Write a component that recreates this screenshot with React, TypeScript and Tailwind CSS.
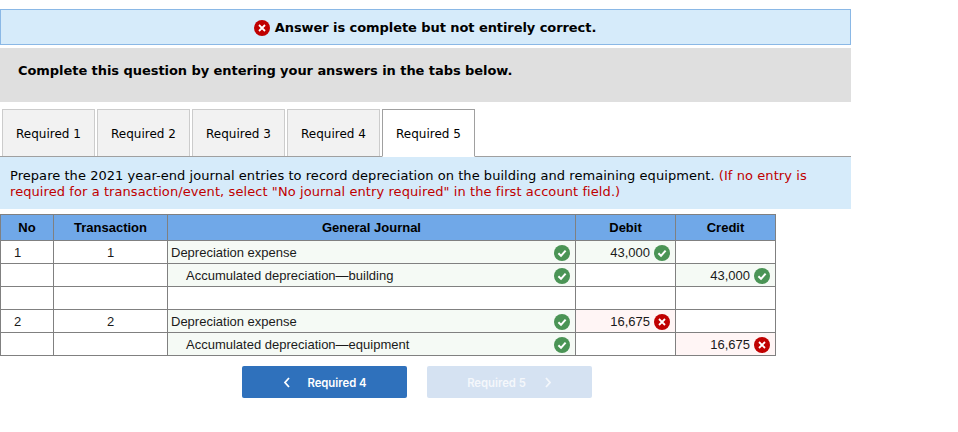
const verdana = { fontFamily: '"DejaVu Sans", sans-serif' };

function Check() {
  return (
    <svg width="16" height="16" viewBox="0 0 16 16" className="shrink-0">
      <circle cx="8" cy="8" r="8" fill="#4a9455" />
      <path d="M4.4 8.3 L7 10.8 L11.6 5.6" fill="none" stroke="#fff" strokeWidth="2" />
    </svg>
  );
}

function Cross({ size = 16 }: { size?: number }) {
  return (
    <svg width={size} height={size} viewBox="0 0 16 16" className="shrink-0">
      <circle cx="8" cy="8" r="8" fill="#c00000" />
      <path d="M5 5 L11 11 M11 5 L5 11" fill="none" stroke="#fff" strokeWidth="1.8" />
    </svg>
  );
}

type Row = {
  no: string;
  tx: string;
  acct: string;
  indent?: boolean;
  debit?: string;
  debitOk?: boolean;
  credit?: string;
  creditOk?: boolean;
};

const rows: Row[] = [
  { no: "1", tx: "1", acct: "Depreciation expense", debit: "43,000", debitOk: true },
  { no: "", tx: "", acct: "Accumulated depreciation—building", indent: true, credit: "43,000", creditOk: true },
  { no: "", tx: "", acct: "" },
  { no: "2", tx: "2", acct: "Depreciation expense", debit: "16,675", debitOk: false },
  { no: "", tx: "", acct: "Accumulated depreciation—equipment", indent: true, credit: "16,675", creditOk: false },
];

function Amount({ value, ok }: { value?: string; ok?: boolean }) {
  const bg = !value ? "" : ok ? "bg-[#f5faf5]" : "bg-[#fff5f5]";
  return (
    <td className={`border border-[#808080] p-0 pr-[5px] pt-[1px] text-right ${bg}`}>
      {value && (
        <div className="flex items-center justify-end gap-[4px]">
          <span>{value}</span>
          {ok ? <Check /> : <Cross />}
        </div>
      )}
    </td>
  );
}

const tabs = ["Required 1", "Required 2", "Required 3", "Required 4", "Required 5"];

export default function App() {
  return (
    <div className="w-[958px] h-[432px] bg-white pt-[9px] overflow-hidden text-black" style={verdana}>
      <div className="w-[851px]">
        <div className="h-[36px] border border-[#8ab8e6] bg-[#d6ebfa] flex items-center justify-center gap-[5px] pr-[1px] pt-[1px] text-[13px] font-bold tracking-[-0.07px]">
          <Cross />
          <span>Answer is complete but not entirely correct.</span>
        </div>
        <div className="mt-[3px] h-[54px] bg-[#dfdfdf] pl-[18px] pt-[14px] text-[13px] font-bold leading-[18px] tracking-[-0.06px]">
          Complete this question by entering your answers in the tabs below.
        </div>
        <div className="mt-[7px] h-[48px] flex gap-[2px] pl-[2px] border-b border-[#a0a0a0]">
          {tabs.map((t, i) => (
            <div
              key={t}
              className={`w-[93px] flex items-center justify-center text-[12px] border pt-[1px] ${
                i === 4
                  ? "h-[48px] bg-white border-[#a0a0a0] border-b-white"
                  : "h-[47px] bg-[#f2f2f2] border-[#cccccc] border-b-0"
              }`}
            >
              {t}
            </div>
          ))}
        </div>
        <div className="h-[52px] bg-[#d6ebfa] pl-[10px] pr-[20px] pt-[11px] text-[13px] leading-[16px] tracking-[0.05px]">
          Prepare the 2021 year-end journal entries to record depreciation on the building and remaining equipment.{" "}
          <span className="text-[#c00000] tracking-[0.08px]">
            (If no entry is required for a transaction/event, select "No journal entry required" in the first account field.)
          </span>
        </div>
      </div>

      <table
        className="mt-[5px] w-[776px] table-fixed border-collapse text-[13px] text-[#1a1a1a]"
        style={{ fontFamily: '"Liberation Sans", Arial, sans-serif' }}
      >
        <colgroup>
          <col className="w-[53px]" />
          <col className="w-[114px]" />
          <col className="w-[408px]" />
          <col className="w-[100px]" />
          <col className="w-[100px]" />
        </colgroup>
        <thead>
          <tr className="h-[26px] bg-[#70a8e8] text-black">
            {["No", "Transaction", "General Journal", "Debit", "Credit"].map((h) => (
              <th key={h} className="border border-[#808080] p-0 font-bold text-center">
                {h}
              </th>
            ))}
          </tr>
        </thead>
        <tbody>
          {rows.map((r, i) => (
            <tr key={i} className="h-[23px]">
              <td className="border border-[#808080] p-0 pl-[13px] pt-[1px] text-left">{r.no}</td>
              <td className="border border-[#808080] p-0 pt-[1px] text-center">{r.tx}</td>
              <td className={`border border-[#808080] p-0 pr-[5px] pt-[1px] ${r.acct ? "bg-[#f5faf5]" : ""}`}>
                {r.acct && (
                  <div className="flex items-center justify-between">
                    <span className={r.indent ? "pl-[18px]" : "pl-[3px]"}>{r.acct}</span>
                    <Check />
                  </div>
                )}
              </td>
              <Amount value={r.debit} ok={r.debitOk} />
              <Amount value={r.credit} ok={r.creditOk} />
            </tr>
          ))}
        </tbody>
      </table>

      <div className="mt-[10px] flex gap-[20px] pl-[242px]" style={{ fontFamily: "Inter, sans-serif" }}>
        <div className="w-[165px] h-[32px] rounded-[2px] bg-[#2f71bc] flex items-center justify-center gap-[16px] pl-[1px] text-white text-[11.3px] font-semibold">
          <svg width="8" height="11" viewBox="0 0 8 11">
            <path d="M6 1 L2 5.5 L6 10" fill="none" stroke="#fff" strokeWidth="1.8" />
          </svg>
          <span className="pt-[2px]">Required 4</span>
        </div>
        <div className="w-[165px] h-[32px] rounded-[2px] bg-[#d5e2f2] flex items-center justify-center gap-[18px] text-[#f4f7fb] text-[11.3px] font-semibold">
          <span className="pt-[2px]">Required 5</span>
          <svg width="8" height="11" viewBox="0 0 8 11">
            <path d="M2 1 L6 5.5 L2 10" fill="none" stroke="#f4f7fb" strokeWidth="1.8" />
          </svg>
        </div>
      </div>
    </div>
  );
}
